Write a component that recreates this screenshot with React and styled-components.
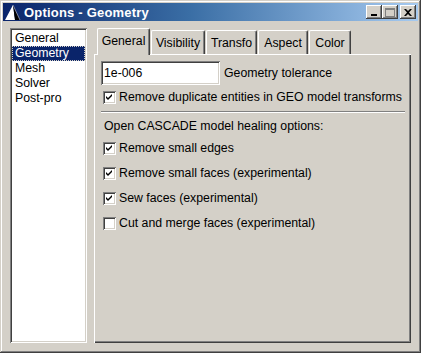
import React, { useState } from 'react';
import styled, { createGlobalStyle } from 'styled-components';

const GlobalStyle = createGlobalStyle`
  html, body {
    margin: 0;
    padding: 0;
    background: #d4d0c8;
  }
  * {
    box-sizing: border-box;
  }
`;

const Window = styled.div`
  width: 421px;
  height: 353px;
  padding: 3px;
  background: #d4d0c8;
  display: flex;
  flex-direction: column;
  font-family: 'Liberation Sans', Arial, sans-serif;
  font-size: 12.3px;
  color: #000;
  box-shadow: inset -1px -1px #404040, inset 1px 1px #d4d0c8,
    inset -2px -2px #808080, inset 2px 2px #ffffff;
`;

const TitleBar = styled.div`
  height: 18px;
  display: flex;
  align-items: center;
  padding: 0 2px 0 1px;
  background: linear-gradient(to right, #0a246a 0%, #3a6ea5 45%, #a6caf0 100%);
`;

const LogoSvg = styled.svg`
  flex: none;
  width: 17px;
  height: 17px;
`;

const TitleText = styled.span`
  flex: 1;
  margin-left: 3px;
  color: #fff;
  font-weight: bold;
  font-size: 13px;
  letter-spacing: 0.2px;
  white-space: nowrap;
`;

const CaptionButton = styled.div`
  flex: none;
  width: 16px;
  height: 14px;
  margin-left: ${p => (p.$gap ? '2px' : '0')};
  background: #d4d0c8;
  display: flex;
  align-items: center;
  justify-content: center;
  box-shadow: inset -1px -1px #404040, inset 1px 1px #ffffff,
    inset -2px -2px #808080, inset 2px 2px #d4d0c8;
`;

const Body = styled.div`
  flex: 1;
  display: flex;
  gap: 7px;
  padding: 7px;
`;

const ListBox = styled.div`
  width: 77px;
  background: #fff;
  padding: 3px 2px;
  box-shadow: inset 1px 1px #808080, inset -1px -1px #ffffff,
    inset 2px 2px #404040, inset -2px -2px #d4d0c8;
`;

const ListItem = styled.div`
  height: 15px;
  line-height: 15px;
  padding-left: 3px;
  background: ${p => (p.$selected ? '#0a246a' : 'transparent')};
  color: ${p => (p.$selected ? '#fff' : '#000')};
  outline: ${p => (p.$selected ? '1px dotted #d4d0c8' : 'none')};
  outline-offset: -1px;
  cursor: default;
`;

const TabArea = styled.div`
  flex: 1;
  display: flex;
  flex-direction: column;
`;

const TabRow = styled.div`
  height: 26px;
  display: flex;
  align-items: flex-end;
  gap: 1px;
  padding-left: 3px;
`;

const Tab = styled.div`
  position: relative;
  width: ${p => p.$w}px;
  height: ${p => (p.$active ? 27 : 24)}px;
  margin-bottom: ${p => (p.$active ? -1 : 0)}px;
  z-index: ${p => (p.$active ? 1 : 0)};
  display: flex;
  align-items: center;
  justify-content: center;
  padding-bottom: ${p => (p.$active ? 2 : 0)}px;
  background: #d4d0c8;
  border-top: 1px solid #fff;
  border-left: 1px solid #fff;
  border-right: 1px solid #404040;
  border-radius: 2px 2px 0 0;
  box-shadow: inset -1px 0 #808080;
  cursor: default;
`;

const Panel = styled.div`
  flex: 1;
  display: flex;
  flex-direction: column;
  padding: 7px 6px 0 7px;
  box-shadow: inset 1px 1px #ffffff, inset -1px -1px #404040,
    inset -2px -2px #808080;
`;

const FieldRow = styled.div`
  display: flex;
  align-items: center;
  gap: 4px;
`;

const TextInput = styled.input`
  width: 119px;
  height: 24px;
  border: none;
  padding: 0 3px;
  font-family: inherit;
  font-size: 12.3px;
  background: #fff;
  outline: none;
  box-shadow: inset 1px 1px #808080, inset -1px -1px #ffffff,
    inset 2px 2px #404040, inset -2px -2px #d4d0c8;
`;

const CheckRow = styled.label`
  display: flex;
  align-items: center;
  gap: 3px;
  height: 16px;
  margin-left: 2px;
  margin-top: ${p => p.$top}px;
  cursor: default;
`;

const Box = styled.span`
  width: 13px;
  height: 13px;
  flex: none;
  background: #fff;
  display: flex;
  align-items: center;
  justify-content: center;
  box-shadow: inset 1px 1px #808080, inset -1px -1px #ffffff,
    inset 2px 2px #404040, inset -2px -2px #d4d0c8;
`;

const Separator = styled.div`
  height: 2px;
  margin: 6px 0 0 0;
  border-top: 1px solid #808080;
  border-bottom: 1px solid #ffffff;
`;

const SectionLabel = styled.div`
  height: 16px;
  line-height: 16px;
  margin: 5px 0 0 3px;
`;

// gmsh-like pyramid icon
const Logo = () => (
  <LogoSvg viewBox="0 0 17 17">
    <polygon points="9,1 1,16 11,16" fill="#ffffff" />
    <polygon points="9,1 11,16 16,16" fill="#000000" />
    <polyline points="9,1 16,16" fill="none" stroke="#9aa0b8" strokeWidth="0.8" />
  </LogoSvg>
);

const Check = ({ checked, label, top }) => (
  <CheckRow $top={top}>
    <Box>
      {checked && (
        <svg width="7" height="7" viewBox="0 0 7 7">
          <path d="M0 2 L2 4 L6 0 L6 2 L2 6 L0 4 Z" fill="#000" />
        </svg>
      )}
    </Box>
    {label}
  </CheckRow>
);

const items = ['General', 'Geometry', 'Mesh', 'Solver', 'Post-pro'];
const tabs = [
  ['General', 53],
  ['Visibility', 54],
  ['Transfo', 51],
  ['Aspect', 50],
  ['Color', 42]
];

export default function App() {
  const [selected, setSelected] = useState('Geometry');
  const [tab, setTab] = useState('General');
  const [tol, setTol] = useState('1e-006');

  return (
    <>
      <GlobalStyle />
      <Window>
        <TitleBar>
          <Logo />
          <TitleText>Options - Geometry</TitleText>
          <CaptionButton>
            <svg width="8" height="8" viewBox="0 0 8 8">
              <rect x="1" y="6" width="6" height="2" fill="#000" />
            </svg>
          </CaptionButton>
          <CaptionButton>
            <svg width="10" height="9" viewBox="0 0 10 9">
              <rect x="0.5" y="0.5" width="9" height="8" fill="none" stroke="#808080" />
              <rect x="0" y="1" width="10" height="1" fill="#808080" />
            </svg>
          </CaptionButton>
          <CaptionButton $gap>
            <svg width="8" height="7" viewBox="0 0 8 7">
              <path d="M0 0 L2 0 L4 2 L6 0 L8 0 L5 3.5 L8 7 L6 7 L4 5 L2 7 L0 7 L3 3.5 Z" fill="#000" />
            </svg>
          </CaptionButton>
        </TitleBar>
        <Body>
          <ListBox>
            {items.map(i => (
              <ListItem key={i} $selected={i === selected} onClick={() => setSelected(i)}>
                {i}
              </ListItem>
            ))}
          </ListBox>
          <TabArea>
            <TabRow>
              {tabs.map(([name, w]) => (
                <Tab key={name} $w={w} $active={name === tab} onClick={() => setTab(name)}>
                  {name}
                </Tab>
              ))}
            </TabRow>
            <Panel>
              <FieldRow>
                <TextInput value={tol} onChange={e => setTol(e.target.value)} />
                Geometry tolerance
              </FieldRow>
              <Check checked top={4} label="Remove duplicate entities in GEO model transforms" />
              <Separator />
              <SectionLabel>Open CASCADE model healing options:</SectionLabel>
              <Check checked top={6} label="Remove small edges" />
              <Check checked top={9} label="Remove small faces (experimental)" />
              <Check checked top={9} label="Sew faces (experimental)" />
              <Check top={9} label="Cut and merge faces (experimental)" />
            </Panel>
          </TabArea>
        </Body>
      </Window>
    </>
  );
}
